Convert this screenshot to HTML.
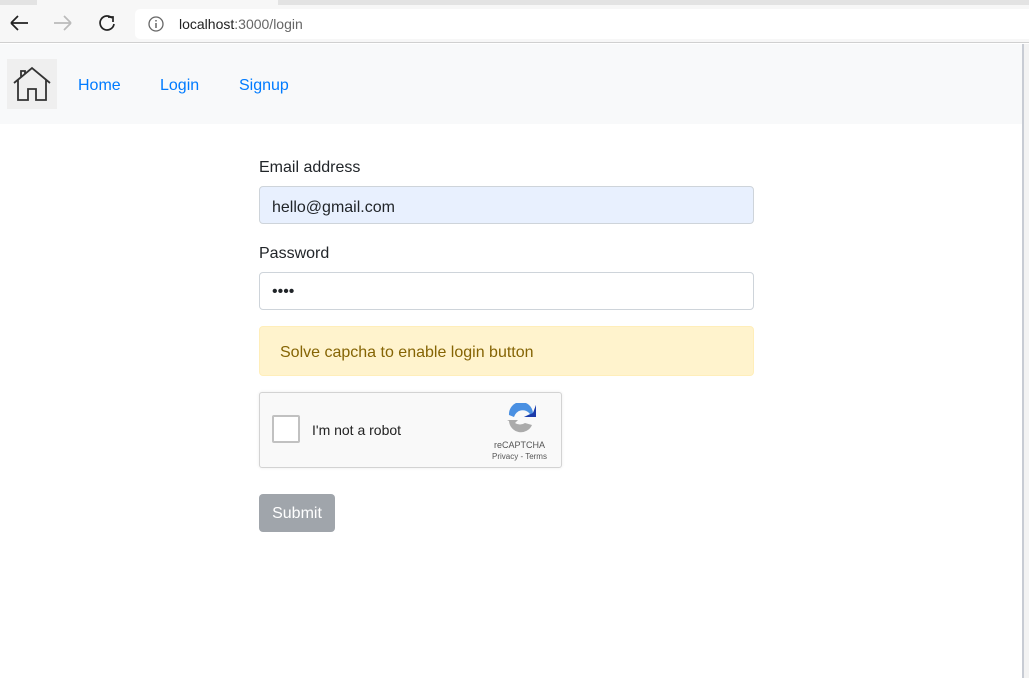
<!DOCTYPE html>
<html><head><style>
*{box-sizing:border-box;margin:0;padding:0}
body{width:1029px;height:678px;overflow:hidden;background:#fff;font-family:"Liberation Sans",sans-serif;position:relative;color:#212529}
.abs{position:absolute}
</style></head><body>
<div class="abs" style="left:0;top:0;width:1029px;height:43px;background:#f7f7f7;border-bottom:1px solid #d0d0d0"></div>
<div class="abs" style="left:0;top:0;width:37px;height:5px;background:#e3e3e3"></div>
<div class="abs" style="left:278px;top:0;width:751px;height:5px;background:#e3e3e3"></div>
<div class="abs" style="left:135px;top:9px;width:894px;height:30px;background:#fff;border-radius:5px 0 0 5px"></div>
<svg class="abs" style="left:8px;top:14px" width="22" height="18"><path d="M3 9H20M3 9L10 2M3 9L10 16" stroke="#222" stroke-width="1.7" fill="none"/></svg>
<svg class="abs" style="left:52px;top:14px" width="22" height="18"><path d="M19 9H2M19 9L12 2M19 9L12 16" stroke="#bbb" stroke-width="1.7" fill="none"/></svg>
<svg class="abs" style="left:97px;top:14px" width="20" height="20"><path d="M15 4A7 7 0 1 0 17 10" stroke="#222" stroke-width="1.7" fill="none"/><path d="M11 3L16 3L16 8" stroke="#222" stroke-width="1.7" fill="none"/></svg>
<svg class="abs" style="left:148px;top:16px" width="17" height="17"><circle cx="8" cy="8" r="7" stroke="#666" stroke-width="1.3" fill="none"/><path d="M8 7V12M8 4V5.5" stroke="#666" stroke-width="1.5"/></svg>
<div class="abs" style="left:179px;top:16px;font-size:14px;color:#222">localhost<span style="color:#666">:3000/login</span></div>
<div class="abs" style="left:0;top:44px;width:1022px;height:80px;background:#f8f9fa"></div>
<div class="abs" style="left:1022px;top:44px;width:2px;height:634px;background:#c8ccd4"></div>
<div class="abs" style="left:1024px;top:44px;width:5px;height:634px;background:#f3f3f3"></div>
<div class="abs" style="left:7px;top:59px;width:50px;height:50px;background:#efefef"></div>
<svg class="abs" style="left:12px;top:64px" width="40" height="40"><path d="M2 19L20 4L38 19M6 16V36H16V25H24V36H34V16M9 13V7H13V10" stroke="#333" stroke-width="1.8" fill="none"/></svg>
<div class="abs" style="left:78px;top:77px;font-size:16px;color:#007bff">Home</div>
<div class="abs" style="left:160px;top:77px;font-size:16px;color:#007bff">Login</div>
<div class="abs" style="left:239px;top:77px;font-size:16px;color:#007bff">Signup</div>
<div class="abs" style="left:259px;top:159px;font-size:16px">Email address</div>
<div class="abs" style="left:259px;top:186px;width:495px;height:38px;background:#e8f0fe;border:1px solid #ced4da;border-radius:4px;padding:12px 12px 0;font-size:16px;line-height:18px">hello@gmail.com</div>
<div class="abs" style="left:259px;top:245px;font-size:16px">Password</div>
<div class="abs" style="left:259px;top:272px;width:495px;height:38px;background:#fff;border:1px solid #ced4da;border-radius:4px;padding:10px 12px;font-size:16px">••••</div>
<div class="abs" style="left:259px;top:326px;width:495px;height:50px;background:#fff3cd;border:1px solid #ffeeba;border-radius:4px;padding:17px 20px 0;font-size:16px;line-height:18px;color:#856404">Solve capcha to enable login button</div>
<div class="abs" style="left:259px;top:392px;width:303px;height:76px;background:#f9f9f9;border:1px solid #d3d3d3;border-radius:3px;box-shadow:0 0 3px rgba(0,0,0,.08)"></div>
<div class="abs" style="left:272px;top:415px;width:28px;height:28px;background:#fff;border:2px solid #c1c1c1;border-radius:2px"></div>
<div class="abs" style="left:312px;top:422px;font-size:14px;color:#222">I'm not a robot</div>
<svg class="abs" style="left:505px;top:403px" width="32" height="32"><path d="M4 12A12 12 0 0 1 28 10L31 2V14H19L25 11A9 9 0 0 0 9 14Z" fill="#4a90e2"/><path d="M28 10L31 2V14H19Z" fill="#1c3aa9"/><path d="M4 18A12 12 0 0 0 27 22L20 20A9 9 0 0 1 10 20L13 17H2Z" fill="#ababab"/></svg>
<div class="abs" style="left:494px;top:440px;font-size:9px;color:#555">reCAPTCHA</div>
<div class="abs" style="left:492px;top:452px;font-size:8px;color:#555">Privacy - Terms</div>
<div class="abs" style="left:259px;top:494px;width:76px;height:38px;background:#a0a5ab;border-radius:4px;color:#fff;font-size:16px;text-align:center;line-height:40px">Submit</div>
</body></html>
